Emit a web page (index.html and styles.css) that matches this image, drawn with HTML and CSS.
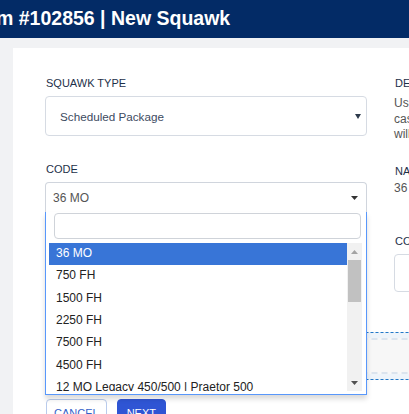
FILE: index.html
```html
<!DOCTYPE html>
<html lang="en">
<head>
<meta charset="utf-8">
<title>New Squawk</title>
<link rel="stylesheet" href="styles.css">
</head>
<body>
<header class="topbar">
  <h1 class="title">m #102856 | New Squawk</h1>
</header>
<main class="page">
  <section class="card">
    <div class="cols">
      <div class="col-left">
        <div class="field">
          <div class="label">SQUAWK TYPE</div>
          <div class="select">
            <span class="select-text">Scheduled Package</span>
            <svg class="select-arrow" width="6" height="5" viewBox="0 0 6 5"><polygon points="0,0 6,0 3,5" fill="#2e3a4c"/></svg>
          </div>
        </div>
        <div class="field field-code">
          <div class="label">CODE</div>
          <div class="combo">
            <div class="combo-box">
              <span class="combo-text">36 MO</span>
              <svg class="combo-caret" width="7" height="4" viewBox="0 0 7 4"><polygon points="0,0 7,0 3.5,4" fill="#333"/></svg>
            </div>
            <div class="dropdown">
              <div class="search"><input class="search-input" type="text"></div>
              <div class="results">
                <ul class="options">
                  <li class="option option-active">36 MO</li>
                  <li class="option">750 FH</li>
                  <li class="option">1500 FH</li>
                  <li class="option">2250 FH</li>
                  <li class="option">7500 FH</li>
                  <li class="option">4500 FH</li>
                  <li class="option">12 MO Legacy 450/500 | Praetor 500</li>
                  <li class="option">24 MO Legacy 450/500 | Praetor 500</li>
                </ul>
                <div class="scrollbar">
                  <div class="sb-btn"><svg width="7" height="4" viewBox="0 0 7 4"><polygon points="0,4 7,4 3.5,0" fill="#a3a3a3"/></svg></div>
                  <div class="sb-thumb"></div>
                  <div class="sb-space"></div>
                  <div class="sb-btn"><svg width="7" height="4" viewBox="0 0 7 4"><polygon points="0,0 7,0 3.5,4" fill="#505050"/></svg></div>
                </div>
              </div>
            </div>
          </div>
        </div>
      </div>
      <div class="col-right">
        <div class="label">DESCRIPTION</div>
        <p class="desc">Use this squawk type for scheduled inspections.<br>case packages are generated from the program and<br>will be added to the work order automatically.</p>
        <div class="label label-name">NAME</div>
        <p class="value">36 MO</p>
        <div class="label label-co">COMMENTS</div>
        <div class="text-input"></div>
      </div>
    </div>
    <div class="dropzone"><div class="dropzone-inner"></div></div>
    <div class="actions">
      <button class="btn btn-outline" type="button">CANCEL</button>
      <button class="btn btn-primary" type="button">NEXT</button>
    </div>
  </section>
</main>
</body>
</html>
```

FILE: styles.css
```css
html, body {
  margin: 0;
  padding: 0;
  width: 409px;
  height: 414px;
  overflow: hidden;
  background: #f1f2f4;
  font-family: "Liberation Sans", Arial, sans-serif;
}

.topbar {
  background: #032b66;
  height: 38px;
  overflow: hidden;
}

.title {
  margin: 0 0 0 -4px;
  padding: 0 0 2px 0;
  font-size: 19.5px;
  line-height: 36px;
  font-weight: bold;
  color: #ffffff;
  white-space: nowrap;
}

.page {
  padding: 10px 0 0 13px;
}

.card {
  background: #ffffff;
  width: 760px;
  padding: 29px 0 60px 32px;
}

.cols {
  display: flex;
  gap: 27px;
  align-items: flex-start;
}

.col-left {
  width: 322px;
  flex: none;
}

.col-right {
  width: 320px;
  flex: none;
}

.label {
  font-size: 11px;
  line-height: 12px;
  color: #1d3049;
  margin-bottom: 7px;
  padding-left: 1px;
  white-space: nowrap;
}

.field {
  margin-bottom: 27px;
}

.field-code {
  margin-bottom: 0;
}

.select {
  box-sizing: border-box;
  height: 40px;
  border: 1px solid #d6dbe3;
  border-radius: 4px;
  display: flex;
  align-items: center;
  justify-content: space-between;
  padding: 0 5px 0 14px;
}

.select-text {
  font-size: 11.7px;
  color: #3d4b5f;
}

.combo {
  position: relative;
}

.combo-box {
  box-sizing: border-box;
  height: 30px;
  border: 1px solid #d0d5dd;
  border-bottom: none;
  border-radius: 4px 4px 0 0;
  display: flex;
  align-items: center;
  justify-content: space-between;
  padding: 1px 8px 0 7px;
}

.combo-text {
  font-size: 12px;
  color: #555555;
}

.dropdown {
  position: absolute;
  top: 100%;
  left: 0;
  right: 0;
  z-index: 5;
  background: #ffffff;
  border: 1px solid #5897fb;
  border-top: none;
  box-shadow: 0 4px 5px rgba(0, 0, 0, 0.15);
  padding: 1px 4px 3px 3px;
}

.search {
  margin: 0 1px 4px 5px;
}

.search-input {
  display: block;
  box-sizing: border-box;
  width: 100%;
  height: 26px;
  margin: 0;
  border: 1px solid #cfd3d9;
  border-radius: 4px;
  background: #ffffff;
  outline: none;
}

.results {
  display: flex;
  height: 148px;
}

.options {
  flex: 1;
  list-style: none;
  margin: 0;
  padding: 0;
  overflow: hidden;
}

.option {
  padding: 3px 7px 4px;
  font-size: 12px;
  line-height: 15.33px;
  color: #222222;
  white-space: nowrap;
}

.option-active {
  background: #3875d7;
  color: #ffffff;
}

.scrollbar {
  width: 15px;
  flex: none;
  background: #f1f1f1;
  display: flex;
  flex-direction: column;
}

.sb-btn {
  height: 17px;
  display: flex;
  align-items: center;
  justify-content: center;
}

.sb-btn svg {
  display: block;
}

.sb-thumb {
  height: 42px;
  margin: 0 1px;
  background: #c1c1c1;
}

.sb-space {
  flex: 1;
}

.desc {
  margin: 0 0 22.5px 0;
  font-size: 12px;
  line-height: 15.5px;
  color: #555555;
  white-space: nowrap;
}

.label-name {
  margin-bottom: 4px;
}

.value {
  margin: 0 0 38.5px 0;
  font-size: 12px;
  line-height: 15.5px;
  color: #555555;
}

.text-input {
  box-sizing: border-box;
  height: 38px;
  border: 1px solid #d6dbe3;
  border-radius: 4px;
}

.dropzone {
  margin-top: 40px;
  width: 669px;
  border: 1px dashed #2278c8;
  background: #eef4fa;
  padding: 5px;
  box-sizing: border-box;
}

.dropzone-inner {
  height: 32px;
  border: 2px dashed #dbe4ee;
  background: #f7f7f7;
}

.actions {
  margin-top: 19px;
  display: flex;
  gap: 10px;
  padding-left: 1px;
}

.btn {
  box-sizing: border-box;
  height: 27px;
  margin: 0;
  font-family: "Liberation Sans", Arial, sans-serif;
  font-size: 11px;
  border-radius: 4px;
  border: 1px solid #b9cbec;
  cursor: pointer;
}

.btn-outline {
  background: #ffffff;
  color: #3461c9;
  padding: 0 7px;
}

.btn-primary {
  background: #2f55d4;
  border-color: #2f55d4;
  color: #ffffff;
  padding: 0 9px;
}
```
